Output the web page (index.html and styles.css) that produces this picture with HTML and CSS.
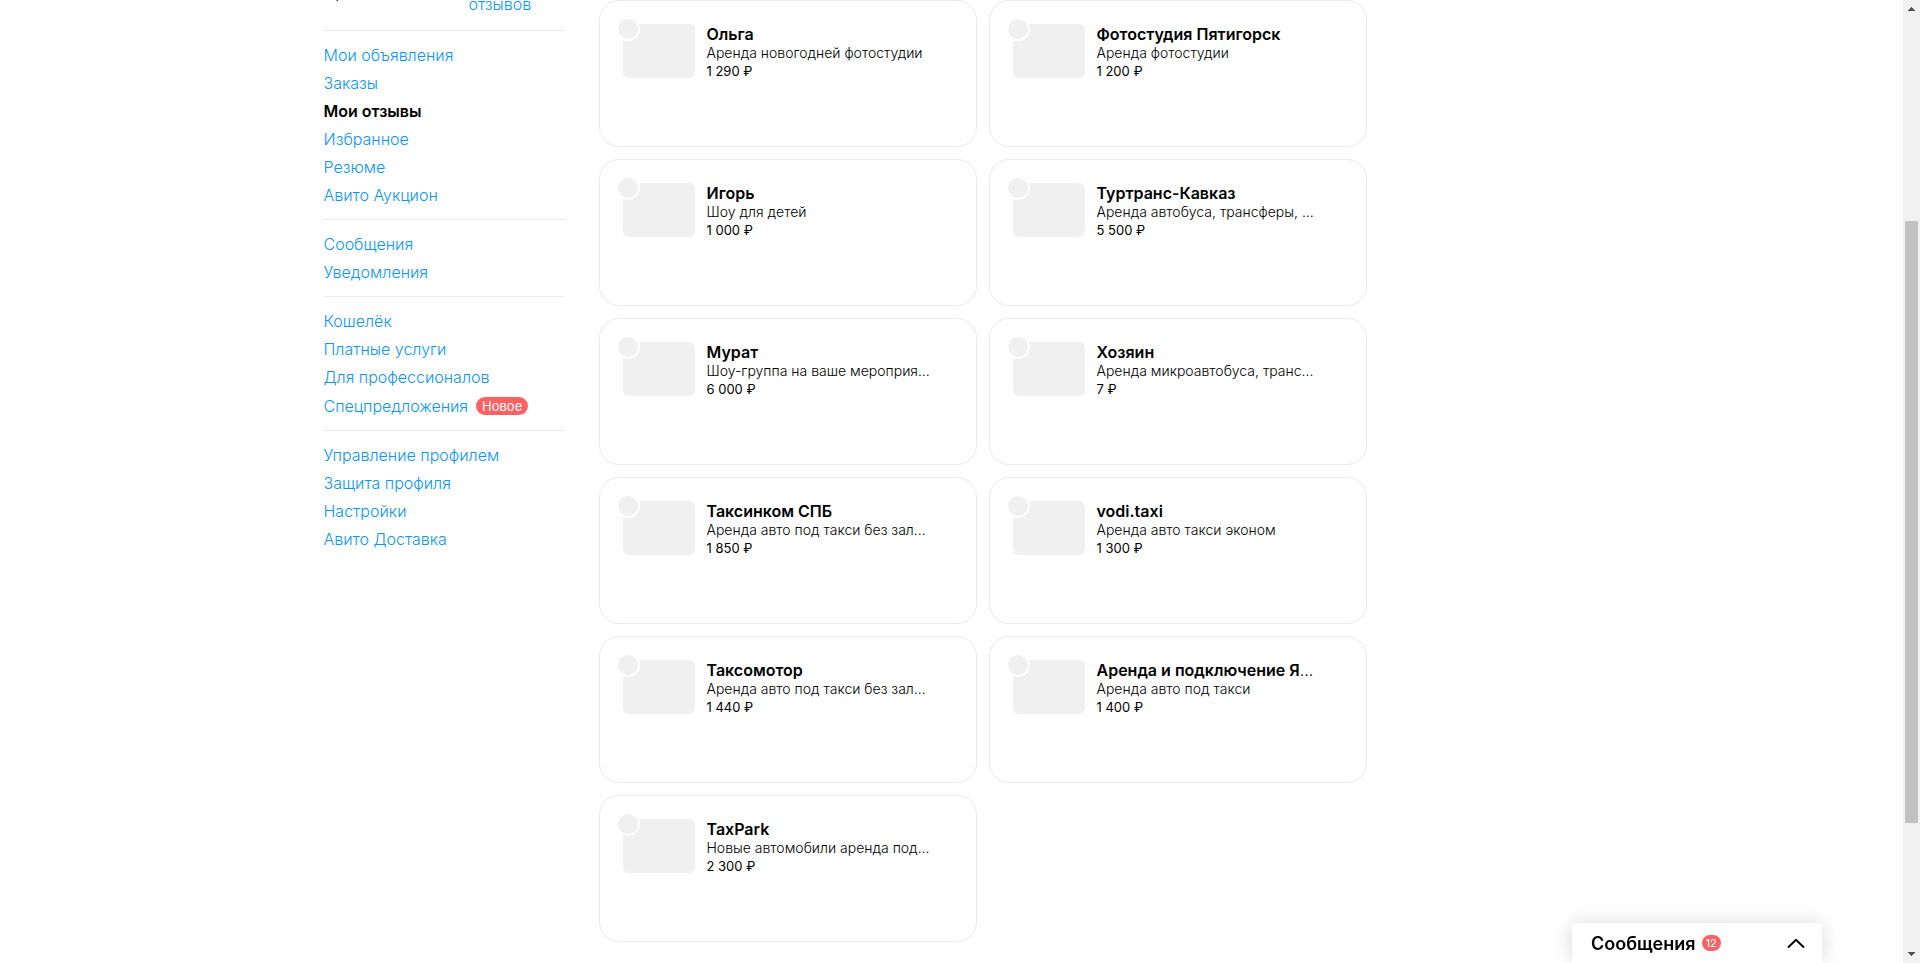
FILE: index.html
```html
<!DOCTYPE html>
<html lang="ru">
<head>
<meta charset="utf-8">
<title>Мои отзывы</title>
<link rel="stylesheet" href="styles.css">
</head>
<body>
<div class="page">
  <div class="layout">
    <aside class="sidebar">
      <div class="rating"><span class="rating-value">,</span><a class="rating-link" href="#">отзывов</a></div>
      <nav class="menu">
        <ul class="group">
          <li><a href="#">Мои объявления</a></li>
          <li><a href="#">Заказы</a></li>
          <li><a class="current" href="#">Мои отзывы</a></li>
          <li><a href="#">Избранное</a></li>
          <li><a href="#">Резюме</a></li>
          <li><a href="#">Авито Аукцион</a></li>
        </ul>
        <ul class="group">
          <li><a href="#">Сообщения</a></li>
          <li><a href="#">Уведомления</a></li>
        </ul>
        <ul class="group">
          <li><a href="#">Кошелёк</a></li>
          <li><a href="#">Платные услуги</a></li>
          <li><a href="#">Для профессионалов</a></li>
          <li class="with-badge"><a href="#">Спецпредложения</a><span class="badge">Новое</span></li>
        </ul>
        <ul class="group">
          <li><a href="#">Управление профилем</a></li>
          <li><a href="#">Защита профиля</a></li>
          <li><a href="#">Настройки</a></li>
          <li><a href="#">Авито Доставка</a></li>
        </ul>
      </nav>
    </aside>
    <main class="cards">
      <article class="card"><div class="thumb"><span class="avatar"></span></div><div class="info"><h3>Ольга</h3><p>Аренда новогодней фотостудии</p><p class="price">1 290 ₽</p></div></article>
      <article class="card"><div class="thumb"><span class="avatar"></span></div><div class="info"><h3>Фотостудия Пятигорск</h3><p>Аренда фотостудии</p><p class="price">1 200 ₽</p></div></article>
      <article class="card"><div class="thumb"><span class="avatar"></span></div><div class="info"><h3>Игорь</h3><p>Шоу для детей</p><p class="price">1 000 ₽</p></div></article>
      <article class="card"><div class="thumb"><span class="avatar"></span></div><div class="info"><h3>Туртранс-Кавказ</h3><p>Аренда автобуса, трансферы, ...</p><p class="price">5 500 ₽</p></div></article>
      <article class="card"><div class="thumb"><span class="avatar"></span></div><div class="info"><h3>Мурат</h3><p>Шоу-группа на ваше мероприя...</p><p class="price">6 000 ₽</p></div></article>
      <article class="card"><div class="thumb"><span class="avatar"></span></div><div class="info"><h3>Хозяин</h3><p>Аренда микроавтобуса, транс...</p><p class="price">7 ₽</p></div></article>
      <article class="card"><div class="thumb"><span class="avatar"></span></div><div class="info"><h3>Таксинком СПБ</h3><p>Аренда авто под такси без зал...</p><p class="price">1 850 ₽</p></div></article>
      <article class="card"><div class="thumb"><span class="avatar"></span></div><div class="info"><h3>vodi.taxi</h3><p>Аренда авто такси эконом</p><p class="price">1 300 ₽</p></div></article>
      <article class="card"><div class="thumb"><span class="avatar"></span></div><div class="info"><h3>Таксомотор</h3><p>Аренда авто под такси без зал...</p><p class="price">1 440 ₽</p></div></article>
      <article class="card"><div class="thumb"><span class="avatar"></span></div><div class="info"><h3>Аренда и подключение Я<span class="dots">...</span></h3><p>Аренда авто под такси</p><p class="price">1 400 ₽</p></div></article>
      <article class="card"><div class="thumb"><span class="avatar"></span></div><div class="info"><h3>TaxPark</h3><p>Новые автомобили аренда под...</p><p class="price">2 300 ₽</p></div></article>
    </main>
  </div>
</div>
<button class="messenger" type="button">
  <span class="messenger-title">Сообщения</span><span class="count">12</span>
  <svg class="chevron" width="18" height="11" viewBox="0 0 18 11" fill="none" stroke="#000" stroke-width="2"><path d="M1 9.5 9 1.8l8 7.7"/></svg>
</button>
<div class="scrollbar" aria-hidden="true">
  <svg width="7" height="4" viewBox="0 0 7 4" fill="#505050" shape-rendering="crispEdges"><path d="M3 0h1v1h1v1h1v1h1v1H0V3h1V2h1V1h1z"/></svg>
  <div class="track"><div class="thumb-bar"></div></div>
  <svg width="7" height="4" viewBox="0 0 7 4" fill="#505050" shape-rendering="crispEdges"><path d="M0 0h7v1H6v1H5v1H4v1H3V3H2V2H1V1H0z"/></svg>
</div>
</body>
</html>
```
FILE: styles.css
```css
* { box-sizing: border-box; }
body {
  margin: 0;
  height: 100vh;
  overflow: hidden;
  display: flex;
  background: #fff;
  color: #000;
  font-family: Inter, "Noto Sans", sans-serif;
}
.page { flex: 1; min-width: 0; }
.layout {
  display: flex;
  gap: 35px;
  max-width: 1256px;
  margin: 0 auto;
}
.sidebar { flex: none; width: 240px; }
.rating {
  display: flex;
  height: 30px;
  font-size: 16px;
  line-height: 8px;
}
.rating-value { width: 145px; padding-left: 12px; line-height: 0; margin-top: -8px; }
a { color: #0a95ff; text-decoration: none; font-weight: 300; }
.group {
  list-style: none;
  margin: 0;
  padding: 10px 0;
  border-top: 1px solid #ebebeb;
  font-size: 16px;
  line-height: 28px;
}
.group .current { color: #000; font-weight: 600; }
.with-badge { display: flex; align-items: center; gap: 8px; height: 29px; }
.badge {
  padding: 0 6px;
  border-radius: 9px;
  background: #ff6163;
  color: #fff;
  font-size: 13px;
  line-height: 18px;
}
.cards {
  flex: 1;
  max-width: 768px;
  display: grid;
  grid-template-columns: 1fr 1fr;
  grid-auto-rows: 147px;
  gap: 12px;
}
.card {
  display: flex;
  gap: 12px;
  padding: 23px;
  border: 1px solid #ebebeb;
  border-radius: 20px;
  min-width: 0;
}
.thumb {
  position: relative;
  flex: none;
  width: 72px;
  height: 54px;
  border-radius: 6px;
  background: #f0f0f0;
}
.avatar {
  position: absolute;
  left: -7px;
  top: -7px;
  width: 24px;
  height: 24px;
  border: 2px solid #fff;
  border-radius: 50%;
  background: #f0f0f0;
}
.info { min-width: 0; white-space: nowrap; }
h3 { margin: 0; font-size: 16px; line-height: 20px; font-weight: 600; }
.dots { font-weight: 300; }
p { margin: 0; font-size: 14px; line-height: 18px; font-weight: 300; }
.price { font-size: 13px; font-weight: 400; }
.messenger {
  position: fixed;
  right: 98px;
  bottom: 0;
  width: 250px;
  height: 40px;
  padding: 0 17px 0 19px;
  display: flex;
  align-items: center;
  gap: 6px;
  border: 0;
  border-radius: 4px 4px 0 0;
  background: #fff;
  box-shadow: 0 0 20px rgba(0, 0, 0, 0.15);
  color: #000;
  font-family: inherit;
}
.messenger-title { font-size: 18px; font-weight: 600; }
.count {
  padding: 0 4px;
  border-radius: 8px;
  background: #ff6163;
  color: #fff;
  font-size: 11px;
  line-height: 16px;
  font-weight: 500;
}
.chevron { margin-left: auto; }
.scrollbar {
  flex: none;
  width: 17px;
  padding: 7px 0;
  display: flex;
  flex-direction: column;
  align-items: center;
  background: #f1f1f1;
}
.track { flex: 1; width: 13px; padding-top: 210px; }
.thumb-bar { height: 602px; background: #c1c1c1; }
```
